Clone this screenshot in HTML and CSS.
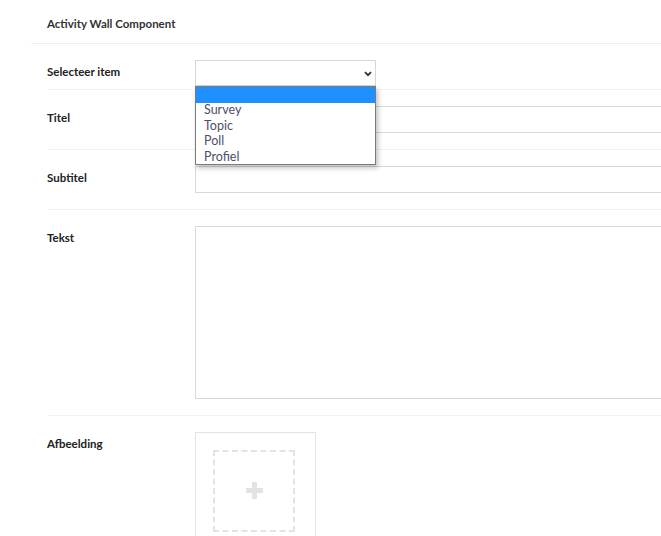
FILE: index.html
```html
<!DOCTYPE html>
<html>
<head>
    <title>Activity Wall Component</title>
    <link rel="stylesheet" href="styles.css">
</head>
<body>
    <div class="panel">
        <div class="panel-header">Activity Wall Component</div>

        <div class="form">
            <div class="form-row form-row-select">
                <label class="form-label">Selecteer item</label>
                <div class="select-wrap">
                    <div class="select-box">
                        <svg class="select-arrow" width="8" height="6" viewBox="0 0 8 6">
                            <path d="M1 1.2 L4 4.2 L7 1.2" fill="none" stroke="#333" stroke-width="1.8"/>
                        </svg>
                    </div>
                    <ul class="select-menu">
                        <li class="select-option selected">&nbsp;</li>
                        <li class="select-option">Survey</li>
                        <li class="select-option">Topic</li>
                        <li class="select-option">Poll</li>
                        <li class="select-option">Profiel</li>
                    </ul>
                </div>
            </div>

            <div class="form-row">
                <label class="form-label">Titel</label>
                <input type="text" class="form-input">
            </div>

            <div class="form-row">
                <label class="form-label">Subtitel</label>
                <input type="text" class="form-input">
            </div>

            <div class="form-row">
                <label class="form-label">Tekst</label>
                <textarea class="form-textarea"></textarea>
            </div>

            <div class="form-row">
                <label class="form-label">Afbeelding</label>
                <div class="image-box">
                    <div class="image-drop">
                        <span class="plus"></span>
                    </div>
                </div>
            </div>
        </div>
    </div>
</body>
</html>
```

FILE: styles.css
```css
body {
    font-family: Lato, 'Open Sans', sans-serif;
    margin: 0;
    background-color: #ffffff;
    color: #2b2b2b;
    overflow: hidden;
    height: 536px;
}

.panel {
    margin-left: 31px;
}

.panel-header {
    padding: 17px 16px 12px 16px;
    font-size: 11.5px;
    line-height: 14px;
    font-weight: bold;
    color: #333333;
    border-bottom: 1px solid #eeeeee;
}

.form {
    margin-left: 16px;
}

.form-row {
    display: flex;
    padding: 16px 0;
    border-bottom: 1px solid #f2f2f2;
}

.form-row-select {
    padding-bottom: 3px;
}

.form-label {
    width: 148px;
    flex-shrink: 0;
    padding-top: 5px;
    font-size: 11.5px;
    line-height: 14px;
    font-weight: bold;
    color: #222222;
}

.select-wrap {
    position: relative;
}

.select-box {
    width: 179px;
    height: 24px;
    border: 1px solid #d6d6d6;
    background-color: #ffffff;
    display: flex;
    align-items: center;
    justify-content: flex-end;
}

.select-arrow {
    margin-right: 3px;
    margin-top: 1px;
}

.select-menu {
    position: absolute;
    top: 26px;
    left: 0;
    width: 179px;
    margin: 0;
    padding: 0;
    list-style: none;
    background-color: #ffffff;
    border: 1px solid #7a7a7a;
    box-shadow: 2px 3px 5px rgba(0, 0, 0, 0.25);
    z-index: 1;
}

.select-option {
    font-size: 12.5px;
    line-height: 15.5px;
    padding-left: 8px;
    color: #4a5068;
}

.select-option.selected {
    background-color: #1e90ff;
    height: 16px;
    margin-bottom: -1px;
}

.form-input {
    width: 520px;
    height: 27px;
    box-sizing: border-box;
    flex-shrink: 0;
    border: 1px solid #d9d9d9;
    margin: 0;
    padding: 0 8px;
    font-family: inherit;
    outline: none;
}

.form-textarea {
    width: 520px;
    height: 173px;
    box-sizing: border-box;
    flex-shrink: 0;
    border: 1px solid #d9d9d9;
    margin: 0;
    padding: 6px 8px;
    resize: none;
    font-family: inherit;
    outline: none;
}

.image-box {
    width: 102px;
    height: 116px;
    border: 1px solid #e3e3e3;
    padding: 17px 0 0 17px;
}

.image-drop {
    width: 78px;
    height: 78px;
    border: 2px dashed #e3e3e3;
    display: flex;
    align-items: center;
    justify-content: center;
}

.plus {
    position: relative;
    width: 17px;
    height: 17px;
    margin-top: -2px;
}

.plus::before,
.plus::after {
    content: "";
    position: absolute;
    background-color: #e3e3e3;
}

.plus::before {
    left: 6px;
    top: 0;
    width: 5px;
    height: 17px;
}

.plus::after {
    left: 0;
    top: 6px;
    width: 17px;
    height: 5px;
}
```
